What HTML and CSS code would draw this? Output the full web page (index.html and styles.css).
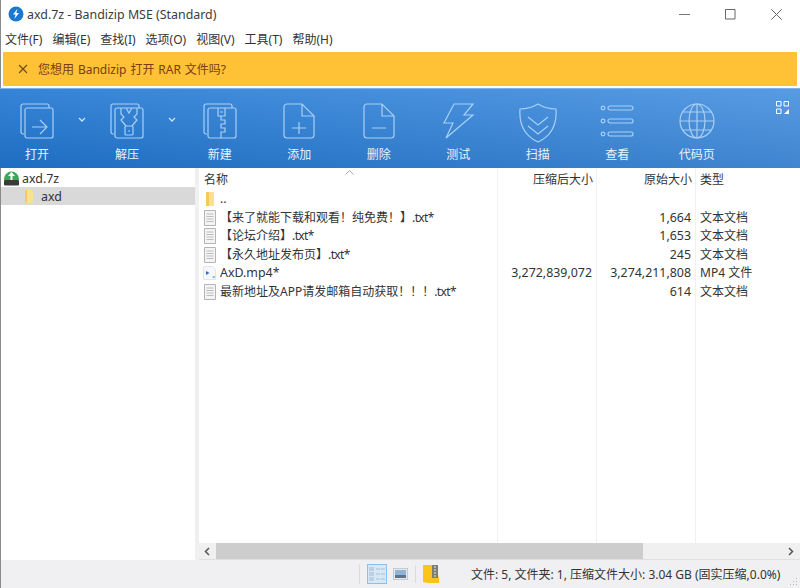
FILE: index.html
```html
<!DOCTYPE html>
<html lang="zh-CN">
<head>
    <meta charset="UTF-8">
    <title>axd.7z - Bandizip MSE (Standard)</title>
    <link rel="stylesheet" href="styles.css">
</head>
<body>
    <div class="window">
        <div class="titlebar">
            <svg class="app-icon" width="16" height="16" viewBox="0 0 16 16">
                <circle cx="8" cy="8" r="7.5" fill="#1b78d0"/>
                <path d="M9.5 2.8 5 8.6h2.6L6.4 13l4.6-6H8.3z" fill="#fff"/>
            </svg>
            <span class="title">axd.7z - Bandizip MSE (Standard)</span>
            <div class="win-buttons">
                <svg width="11" height="11" viewBox="0 0 11 11"><path d="M0 5.500h11" stroke="#777" fill="none"/></svg>
                <svg width="11" height="11" viewBox="0 0 11 11"><path d="M.5.500h9.500v9.500H.5z" stroke="#666" fill="none"/></svg>
                <svg width="11" height="11" viewBox="0 0 11 11"><path d="M.3.300l10.400 10.400M10.700.3.300 10.700" stroke="#666" fill="none"/></svg>
            </div>
        </div>

        <div class="menubar">
            <span>文件(F)</span>
            <span>编辑(E)</span>
            <span>查找(I)</span>
            <span>选项(O)</span>
            <span>视图(V)</span>
            <span>工具(T)</span>
            <span>帮助(H)</span>
        </div>

        <div class="banner">
            <svg width="10" height="10" viewBox="0 0 10 10"><path d="M1 1l8 8M9 1 1 9" stroke="#6b4a1a" stroke-width="1.100" fill="none"/></svg>
            <span>您想用 Bandizip 打开 RAR 文件吗?</span>
        </div>

        <div class="toolbar">
            <div class="tool tool-split">
                <svg class="tool-icon" width="34" height="36" viewBox="0 0 34 36">
                    <path d="M4 31H3a2 2 0 0 1-2-2V3a2 2 0 0 1 2-2h24a2 2 0 0 1 2 2v2"/>
                    <rect x="5" y="5" width="28" height="30" rx="2"/>
                    <path d="M12 24h14M20 17l7 7-7 7"/>
                </svg>
                <span>打开</span>
            </div>
            <div class="tool-arrow"><svg width="8" height="5" viewBox="0 0 8 5"><path d="M1 1l3 3 3-3"/></svg></div>
            <div class="tool tool-split">
                <svg class="tool-icon" width="34" height="36" viewBox="0 0 34 36">
                    <path d="M4 31H3a2 2 0 0 1-2-2V3a2 2 0 0 1 2-2h24a2 2 0 0 1 2 2v2"/>
                    <rect x="5" y="5" width="28" height="30" rx="2"/>
                    <path d="M11 5v6l3 3-3 3 5 6M27 5v6l-3 3 3 3-5 6M16 5l3 5 3-5"/>
                    <rect x="15" y="23" width="8" height="9" rx="1"/>
                    <path d="M18 28h2"/>
                </svg>
                <span>解压</span>
            </div>
            <div class="tool-arrow"><svg width="8" height="5" viewBox="0 0 8 5"><path d="M1 1l3 3 3-3"/></svg></div>
            <div class="tool">
                <svg class="tool-icon" width="34" height="36" viewBox="0 0 34 36">
                    <path d="M4 31H3a2 2 0 0 1-2-2V3a2 2 0 0 1 2-2h24a2 2 0 0 1 2 2v2"/>
                    <rect x="5" y="5" width="28" height="30" rx="2"/>
                    <path d="M15 5v8h7V5M17 9h3M18 13v4h4v4h-4v4h4v4h-4v6"/>
                </svg>
                <span>新建</span>
            </div>
            <div class="tool">
                <svg class="tool-icon" width="34" height="36" viewBox="0 0 34 36">
                    <path d="M20 1H5a3 3 0 0 0-3 3v28a3 3 0 0 0 3 3h24a3 3 0 0 0 3-3V13z"/>
                    <path d="M20 1v12h12M17 19v12M10 25h14"/>
                </svg>
                <span>添加</span>
            </div>
            <div class="tool">
                <svg class="tool-icon" width="34" height="36" viewBox="0 0 34 36">
                    <path d="M20 1H5a3 3 0 0 0-3 3v28a3 3 0 0 0 3 3h24a3 3 0 0 0 3-3V13z"/>
                    <path d="M20 1v12h12M10 25h14"/>
                </svg>
                <span>删除</span>
            </div>
            <div class="tool">
                <svg class="tool-icon" width="34" height="36" viewBox="0 0 34 36">
                    <path d="M13 1h19L23 12h9L5 35l7-15H3z"/>
                </svg>
                <span>测试</span>
            </div>
            <div class="tool">
                <svg class="tool-icon" width="40" height="40" viewBox="0 0 40 40">
                    <path d="M20 1c5 3 11 5 18 5 1 14-3 26-18 33C5 32 1 20 2 6c7 0 13-2 18-5z"/>
                    <path d="M10 14l10 8 10-8M10 23l10 8 10-8"/>
                </svg>
                <span>扫描</span>
            </div>
            <div class="tool">
                <svg class="tool-icon" width="34" height="36" viewBox="0 0 34 36">
                    <circle cx="3" cy="5" r="1.800"/><rect x="8" y="3" width="25" height="4" rx="2"/>
                    <circle cx="3" cy="18" r="1.800"/><rect x="8" y="16" width="25" height="4" rx="2"/>
                    <circle cx="3" cy="31" r="1.800"/><rect x="8" y="29" width="25" height="4" rx="2"/>
                </svg>
                <span>查看</span>
            </div>
            <div class="tool">
                <svg class="tool-icon" width="36" height="36" viewBox="0 0 36 36">
                    <circle cx="18" cy="18" r="17"/>
                    <ellipse cx="18" cy="18" rx="8" ry="17"/>
                    <path d="M18 1v34M1 18h34M4 9h28M4 27h28"/>
                </svg>
                <span>代码页</span>
            </div>
            <svg class="layout-btn" width="13" height="13" viewBox="0 0 13 13">
                <path d="M.5.500h4.500v4.500H.5zM8 .5h4.500v4.500H8zM.5 8h4.500v4.500H.5z" fill="none" stroke="#fff"/>
                <path d="M13 8v5H8z" fill="#fff"/>
            </svg>
        </div>

        <div class="main">
            <div class="tree">
                <div class="tree-row">
                    <svg width="15" height="16" viewBox="0 0 15 16">
                        <path d="M0 9a7.500 7.500 0 0 1 15 0v1H0z" fill="#3aa856"/>
                        <path d="M7.500 2 4 6h2.500v4h2V6H11z" fill="#fff"/>
                        <rect y="10" width="15" height="5.500" rx="1" fill="#3a3a3a"/>
                    </svg>
                    <span class="latin">axd.7z</span>
                </div>
                <div class="tree-row tree-selected">
                    <svg width="10" height="14" viewBox="0 0 10 14">
                        <path d="M1 1h6l2 1v12H3l-2-1z" fill="#fbdf94"/>
                        <path d="M1 1h2v13l-2-1z" fill="#f7c95c"/>
                    </svg>
                    <span class="latin">axd</span>
                </div>
            </div>

            <div class="list-pane">
                <div class="list">
                    <div class="list-head">
                        <div class="col-name">名称<svg class="sort-mark" width="9" height="5" viewBox="0 0 9 5"><path d="M.5 4.500 4.500.5l4 4" fill="none" stroke="#aaa"/></svg></div>
                        <div class="col-num">压缩后大小</div>
                        <div class="col-num">原始大小</div>
                        <div class="col-type">类型</div>
                    </div>
                    <div class="list-row">
                        <div class="col-name">
                            <svg class="file-icon" width="12" height="16" viewBox="0 0 12 16"><path d="M2 1h7l1 1v13H2z" fill="#fbdf94"/><path d="M2 1h3v14H2z" fill="#f7c95c"/></svg>
                            <span>..</span>
                        </div>
                        <div class="col-num"></div>
                        <div class="col-num"></div>
                        <div class="col-type"></div>
                    </div>
                    <div class="list-row">
                        <div class="col-name">
                            <svg class="file-icon" width="12" height="16" viewBox="0 0 12 16"><path d="M.5.500h11v15H.5z" fill="#f4f4f4" stroke="#b4b4b4"/><path d="M2.500 4h7M2.500 6.500h7M2.500 9h7M2.500 11.500h7" stroke="#bdbdbd"/></svg>
                            <span>【来了就能下载和观看！纯免费！】<span class="ext">.txt*</span></span>
                        </div>
                        <div class="col-num"></div>
                        <div class="col-num latin">1,664</div>
                        <div class="col-type">文本文档</div>
                    </div>
                    <div class="list-row">
                        <div class="col-name">
                            <svg class="file-icon" width="12" height="16" viewBox="0 0 12 16"><path d="M.5.500h11v15H.5z" fill="#f4f4f4" stroke="#b4b4b4"/><path d="M2.500 4h7M2.500 6.500h7M2.500 9h7M2.500 11.500h7" stroke="#bdbdbd"/></svg>
                            <span>【论坛介绍】<span class="ext">.txt*</span></span>
                        </div>
                        <div class="col-num"></div>
                        <div class="col-num latin">1,653</div>
                        <div class="col-type">文本文档</div>
                    </div>
                    <div class="list-row">
                        <div class="col-name">
                            <svg class="file-icon" width="12" height="16" viewBox="0 0 12 16"><path d="M.5.500h11v15H.5z" fill="#f4f4f4" stroke="#b4b4b4"/><path d="M2.500 4h7M2.500 6.500h7M2.500 9h7M2.500 11.500h7" stroke="#bdbdbd"/></svg>
                            <span>【永久地址发布页】<span class="ext">.txt*</span></span>
                        </div>
                        <div class="col-num"></div>
                        <div class="col-num latin">245</div>
                        <div class="col-type">文本文档</div>
                    </div>
                    <div class="list-row">
                        <div class="col-name">
                            <svg class="file-icon" width="14" height="16" viewBox="0 0 14 16"><path d="M.5 1.500h9l3 3v10H.5z" fill="#f6f8fc" stroke="#e0e4ec"/><path d="M3 6l3.500 2L3 10z" fill="#2f6fc4"/><path d="M9 12l2.500-1v2z" fill="#2f8fe0"/></svg>
                            <span class="latin">AxD.mp4*</span>
                        </div>
                        <div class="col-num latin">3,272,839,072</div>
                        <div class="col-num latin">3,274,211,808</div>
                        <div class="col-type">MP4 文件</div>
                    </div>
                    <div class="list-row">
                        <div class="col-name">
                            <svg class="file-icon" width="12" height="16" viewBox="0 0 12 16"><path d="M.5.500h11v15H.5z" fill="#f4f4f4" stroke="#b4b4b4"/><path d="M2.500 4h7M2.500 6.500h7M2.500 9h7M2.500 11.500h7" stroke="#bdbdbd"/></svg>
                            <span>最新地址及APP请发邮箱自动获取！！！<span class="ext">.txt*</span></span>
                        </div>
                        <div class="col-num"></div>
                        <div class="col-num latin">614</div>
                        <div class="col-type">文本文档</div>
                    </div>
                    <div class="list-fill">
                        <div class="col-name"></div>
                        <div class="col-num"></div>
                        <div class="col-num"></div>
                        <div class="col-type"></div>
                    </div>
                </div>
                <div class="hscroll">
                    <svg class="scroll-arrow" width="6" height="9" viewBox="0 0 6 9"><path d="M1 1l3.500 3.500L1 8" fill="none" stroke="#555" stroke-width="1.500"/></svg>
                    <div class="scroll-thumb"></div>
                    <svg class="scroll-arrow" width="6" height="9" viewBox="0 0 6 9"><path d="M1 1l3.500 3.500L1 8" fill="none" stroke="#555" stroke-width="1.500"/></svg>
                </div>
            </div>
        </div>

        <div class="statusbar">
            <div class="status-icons">
                <div class="view-btn">
                    <svg width="18" height="16" viewBox="0 0 18 16">
                        <path d="M1 1h5v4H1zM1 6h5v4H1zM1 11h5v4H1z" fill="#bcd0e4"/>
                        <path d="M8 3h9M8 8h9M8 13h9" stroke="#b0bcc8" stroke-dasharray="4 1"/>
                    </svg>
                </div>
                <svg width="15" height="12" viewBox="0 0 15 12">
                    <rect x=".5" y=".5" width="14" height="11" fill="#e6e9ee" stroke="#c4c9d0"/>
                    <rect x="2" y="2" width="11" height="5" fill="#8fb4d6"/>
                    <rect x="2" y="7" width="11" height="3" fill="#5f7488"/>
                </svg>
                <div class="status-sep"></div>
                <svg width="16" height="20" viewBox="0 0 16 20">
                    <path d="M0 1h13l3 14v4H5l-5-1z" fill="#fcc419"/>
                    <rect x="9" y="1" width="6" height="13" fill="#7d7d72"/>
                    <path d="M11 3h2M11 6h2M11 9h2M11 12h2" stroke="#eee"/>
                </svg>
            </div>
            <span class="status-text">文件: 5, 文件夹: 1, 压缩文件大小: 3.04 GB (固实压缩,0.0%)</span>
            <svg class="grip" width="9" height="9" viewBox="0 0 9 9">
                <path d="M7 1h1v1H7zM4 4h1v1H4zM7 4h1v1H7zM1 7h1v1H1zM4 7h1v1H4zM7 7h1v1H7z" fill="#bbb"/>
            </svg>
        </div>
    </div>
</body>
</html>
```

FILE: styles.css
```css
* {
    margin: 0;
    padding: 0;
    box-sizing: border-box;
}
html, body {
    height: 100%;
}
body {
    font-family: "Noto Sans", "Noto Sans CJK SC", sans-serif;
    font-size: 12px;
    color: #333;
    background: #fff;
    overflow: hidden;
}
.latin {
    font-size: 12.400px;
}
.ext {
    letter-spacing: -0.6px;
}
.window {
    display: flex;
    flex-direction: column;
    height: 588px;
    border-left: 1px solid #8a8a8a;
}
.titlebar {
    display: flex;
    align-items: center;
    height: 28px;
    padding-left: 7px;
    flex: none;
}
.app-icon {
    margin-right: 3px;
}
.title {
    color: #3c3c3c;
    font-size: 12.400px;
}
.win-buttons {
    display: flex;
    gap: 35px;
    margin-left: auto;
    padding-right: 18px;
}
.menubar {
    display: flex;
    gap: 10px;
    align-items: center;
    height: 22px;
    padding-left: 4px;
    flex: none;
    color: #333;
}
.banner {
    display: flex;
    align-items: center;
    gap: 10px;
    height: 34px;
    margin: 2px 3px 2px 2px;
    padding-left: 15px;
    flex: none;
    background: #ffc136;
    color: #7a3d10;
    word-spacing: 0.8px;
}
.toolbar {
    position: relative;
    display: flex;
    height: 80px;
    margin-left: -1px;
    flex: none;
    background: linear-gradient(to bottom, rgba(255, 255, 255, 0.1), rgba(0, 0, 0, 0.08)), linear-gradient(to right, #1f76d2, #4590e0);
    border-top: 1px solid #7cb2e8;
    color: #fff;
}
.tool {
    display: flex;
    flex-direction: column;
    align-items: center;
    width: 79.500px;
    height: 100%;
    padding-top: 14px;
    position: relative;
    color: #e8f2fc;
}
.tool-split {
    width: 74px;
}
.tool > span {
    position: absolute;
    bottom: 4px;
    line-height: 18px;
}
.tool-icon {
    fill: none;
    stroke: #a9d0f4;
    stroke-width: 1.200;
}
.tool-arrow {
    width: 16px;
    padding-top: 28px;
    line-height: 0;
    text-align: center;
}
.tool-arrow path {
    fill: none;
    stroke: #cfe3f7;
    stroke-width: 1.300;
}
.layout-btn {
    position: absolute;
    top: 12px;
    right: 11px;
}
.main {
    display: flex;
    flex: 1;
    min-height: 0;
}
.tree {
    width: 198px;
    flex: none;
    border-right: 4px solid #f0f0f0;
    padding-top: 1px;
}
.tree-row {
    display: flex;
    align-items: center;
    gap: 3px;
    height: 18px;
    padding-left: 3px;
}
.tree-selected {
    background: #d9d9d9;
    padding-left: 23px;
    gap: 7px;
}
.list-pane {
    display: flex;
    flex-direction: column;
    flex: 1;
    min-width: 0;
}
.list {
    flex: 1;
    display: flex;
    flex-direction: column;
    min-height: 0;
}
.list-head,
.list-row,
.list-fill {
    display: grid;
    grid-template-columns: 298px 99px 99px 105px;
}
.list-head {
    height: 22px;
    line-height: 24px;
}
.list-head .col-num {
    padding-right: 3px;
}
.list-row {
    height: 18.500px;
    line-height: 18.500px;
}
.list-fill {
    flex: 1;
}
.col-name {
    position: relative;
    display: flex;
    align-items: center;
    padding-left: 5px;
    white-space: nowrap;
}
.col-num {
    text-align: right;
    padding-right: 4px;
    border-left: 1px solid #f0f0f0;
    white-space: nowrap;
}
.col-type {
    padding-left: 4px;
    border-left: 1px solid #f0f0f0;
    white-space: nowrap;
}
.sort-mark {
    position: absolute;
    top: 2px;
    left: 146px;
}
.file-icon {
    flex: none;
    width: 14px;
    margin-left: -1px;
    margin-right: 3px;
}
.hscroll {
    display: flex;
    align-items: center;
    height: 17px;
    flex: none;
    background: #f0f0f0;
    border-bottom: 1px solid #e0e0e0;
}
.hscroll .scroll-arrow:first-child {
    transform: scaleX(-1);
    margin-left: 5px;
}
.scroll-thumb {
    width: 427px;
    height: 100%;
    margin-left: 6px;
    margin-right: auto;
    background: #cdcdcd;
}
.hscroll .scroll-arrow:last-child {
    margin-right: 6px;
}
.statusbar {
    display: flex;
    align-items: center;
    height: 28px;
    flex: none;
    background: #f0f0f2;
}
.status-icons {
    display: flex;
    align-items: center;
    gap: 6px;
    margin-left: 358px;
    padding-left: 7px;
    border-left: 1px solid #dcdcdc;
}
.view-btn {
    display: flex;
    align-items: center;
    justify-content: center;
    width: 20px;
    height: 20px;
    background: #d5e8f8;
    border: 1px solid #8cc0ea;
}
.status-sep {
    width: 1px;
    height: 18px;
    margin: 0 1px;
    background: #dcdcdc;
}
.status-text {
    margin-left: 32px;
    white-space: nowrap;
}
.grip {
    margin-left: auto;
    align-self: flex-end;
    margin-bottom: 2px;
    margin-right: 2px;
}
```
